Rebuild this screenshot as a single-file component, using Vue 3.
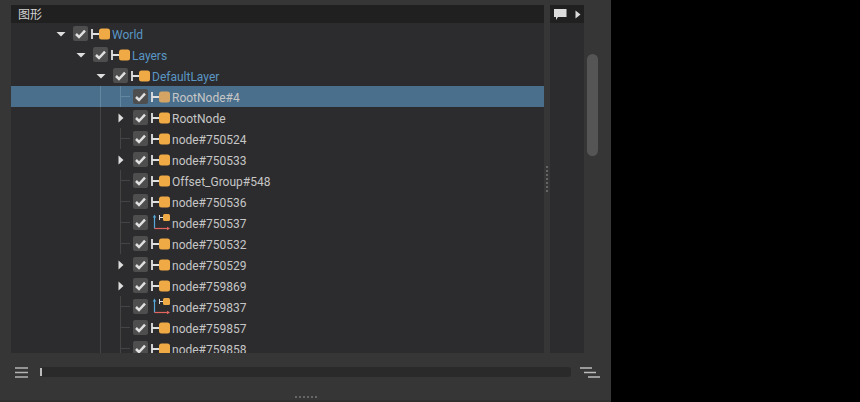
<script setup>
const rows = [
  { name: 'World', depth: 0, arrow: 'down', blue: true },
  { name: 'Layers', depth: 1, arrow: 'down', blue: true },
  { name: 'DefaultLayer', depth: 2, arrow: 'down', blue: true },
  { name: 'RootNode#4', depth: 3, selected: true },
  { name: 'RootNode', depth: 3, arrow: 'right' },
  { name: 'node#750524', depth: 3 },
  { name: 'node#750533', depth: 3, arrow: 'right' },
  { name: 'Offset_Group#548', depth: 3 },
  { name: 'node#750536', depth: 3 },
  { name: 'node#750537', depth: 3, axis: true },
  { name: 'node#750532', depth: 3 },
  { name: 'node#750529', depth: 3, arrow: 'right' },
  { name: 'node#759869', depth: 3, arrow: 'right' },
  { name: 'node#759837', depth: 3, axis: true },
  { name: 'node#759857', depth: 3 },
  { name: 'node#759858', depth: 3 }
]
const padFor = (d) => (d === 3 ? 89 : 49 + d * 20)
</script>

<template>
  <div class="screen">
    <div class="panel">
      <div class="upper">
        <section class="tree">
          <header class="tree-head">图形</header>
          <div class="tree-body">
            <div v-for="row in rows" :key="row.name" class="row" :class="{ selected: row.selected }">
              <span class="pad" :style="{ width: padFor(row.depth) + 'px' }"></span>
              <span v-if="row.depth === 3" class="guide"></span>
              <span class="toggle" :class="{ leaf: !row.arrow && row.depth === 3 }">
                <svg v-if="row.arrow === 'down'" class="arrow" width="10" height="10" viewBox="0 0 10 10"><path d="M.5 3h9L5 7.500z" fill="#dedede" /></svg>
                <svg v-else-if="row.arrow === 'right'" class="arrow" width="10" height="10" viewBox="0 0 10 10"><path d="M2.500.5v9L7.500 5z" fill="#dedede" /></svg>
              </span>
              <span class="check">
                <svg width="11" height="10" viewBox="0 0 11 10"><path d="M1 5 4 8l6-6.300" fill="none" stroke="#e0e0e0" stroke-width="2.500" /></svg>
              </span>
              <svg v-if="row.axis" class="type" width="20" height="21" viewBox="0 0 20 21">
                <path d="M3.500 16.500V5" stroke="#58a9dc" stroke-width="1.200" fill="none" />
                <path d="M1.800 5.500 3.500 2.500l1.700 3z" fill="#58a9dc" />
                <path d="M3.500 16.500H17" stroke="#e0655f" stroke-width="1.200" fill="none" />
                <path d="M16 14.800l3 1.700-3 1.700z" fill="#e0655f" />
                <path d="M8.500 3v5M8.500 5.500H12" stroke="#e0e0e0" stroke-width="1" fill="none" />
                <rect x="12" y="2" width="7" height="7" rx="1.500" fill="#efaa45" />
              </svg>
              <svg v-else class="type" width="20" height="21" viewBox="0 0 20 21">
                <path d="M1 6v10M1 11H8" stroke="#e0e0e0" stroke-width="1.800" fill="none" />
                <rect x="8" y="5.500" width="11" height="11" rx="2.500" :fill="row.selected ? '#d4a465' : '#efaa45'" />
              </svg>
              <span class="label" :class="{ blue: row.blue }">{{ row.name }}</span>
            </div>
          </div>
        </section>
        <div class="grip-v"><i v-for="n in 7" :key="n"></i></div>
        <aside class="side">
          <div class="side-head">
            <svg width="14" height="13" viewBox="0 0 14 13"><path d="M1 1h12.500v8H5L3 12V9H1z" fill="#dcdcdc" /></svg>
            <svg width="6" height="9" viewBox="0 0 6 9"><path d="M.5.5v8L5.500 4.500z" fill="#dcdcdc" /></svg>
          </div>
        </aside>
        <div class="scroll"><div class="thumb"></div></div>
      </div>
      <footer class="bottom">
        <svg width="13" height="11" viewBox="0 0 13 11"><path d="M0 1h13M0 5.500h13M0 10h13" stroke="#b4b4b4" stroke-width="1.400" /></svg>
        <div class="track"><span class="tick"></span></div>
        <svg width="20" height="11" viewBox="0 0 20 11"><path d="M0 1h12M4 5.500h12M8 10h12" stroke="#bcbcbc" stroke-width="1.400" /></svg>
      </footer>
      <div class="grip-h"><i v-for="n in 6" :key="n"></i></div>
    </div>
  </div>
</template>

<style>
html, body { margin: 0; background: #000; }
</style>

<style scoped>
.screen {
  width: 860px;
  height: 402px;
  background: #000;
  overflow: hidden;
}
.panel {
  width: 611px;
  height: 402px;
  background: #363636;
  box-shadow: inset 0 -2px #303030;
  display: flex;
  flex-direction: column;
  box-sizing: border-box;
  padding-top: 5px;
}
.upper {
  display: flex;
  height: 348px;
  padding-left: 11px;
}
.tree {
  width: 533px;
  background: #2c2c2e;
  display: flex;
  flex-direction: column;
  overflow: hidden;
}
.tree-head {
  height: 18px;
  flex: none;
  background: #202020;
  color: #d2d2d2;
  font: 12px/18px "Noto Sans CJK SC", sans-serif;
  padding-left: 7px;
}
.tree-body { flex: 1; overflow: hidden; }
.row {
  height: 21px;
  display: flex;
  align-items: center;
  font: 12px/21px Roboto, sans-serif;
  color: #c6c6c6;
}
.row.selected { background: #4a6f8c; }
.pad { flex: none; height: 21px; }
.guide {
  flex: none;
  width: 20px;
  height: 21px;
  box-sizing: border-box;
  border-left: 1px solid #444;
}
.selected .guide { border-left-color: #6487a1; }
.toggle {
  flex: none;
  width: 13px;
  height: 21px;
  box-sizing: border-box;
  display: flex;
  align-items: center;
}
.arrow { margin-left: -4px; flex: none; }
.toggle.leaf { border-left: 1px solid #444; }
.toggle.leaf::after {
  content: "";
  width: 9px;
  height: 1px;
  background: #444;
}
.selected .toggle.leaf { border-left-color: #6487a1; }
.selected .toggle.leaf::after { background: #6487a1; }
.check {
  flex: none;
  width: 15px;
  height: 15px;
  border-radius: 2px;
  background: #4e4e4e;
  display: flex;
  align-items: center;
  justify-content: center;
}
.type { flex: none; margin-left: 3px; }
.label { margin-left: 1px; padding-top: 3px; line-height: 18px; white-space: nowrap; }
.blue { color: #5a96c4; }
.grip-v {
  width: 6px;
  display: flex;
  flex-direction: column;
  align-items: center;
  justify-content: center;
  gap: 2px;
}
.grip-v i, .grip-h i {
  display: block;
  width: 2px;
  height: 2px;
  background: #666;
}
.side {
  width: 34px;
  background: #2c2c2e;
}
.side-head {
  height: 18px;
  background: #202020;
  display: flex;
  align-items: center;
  justify-content: space-between;
  padding: 0 3px 0 3px;
  box-sizing: border-box;
}
.scroll {
  width: 27px;
  padding: 49px 0 0 3px;
  box-sizing: border-box;
}
.thumb {
  width: 11px;
  height: 102px;
  border-radius: 6px;
  background: #555;
}
.bottom {
  height: 38px;
  display: flex;
  align-items: center;
  padding: 0 11px 0 15px;
  box-sizing: border-box;
}
.track {
  flex: none;
  width: 531px;
  height: 10px;
  margin: 0 9px 0 12px;
  background: #2a2a2a;
  border-radius: 3px;
  box-sizing: border-box;
}
.tick {
  display: block;
  width: 2px;
  height: 8px;
  margin-top: 1px;
  background: #bcbcbc;
}
.grip-h {
  display: flex;
  justify-content: center;
  gap: 2px;
  margin-top: 5px;
}
</style>
